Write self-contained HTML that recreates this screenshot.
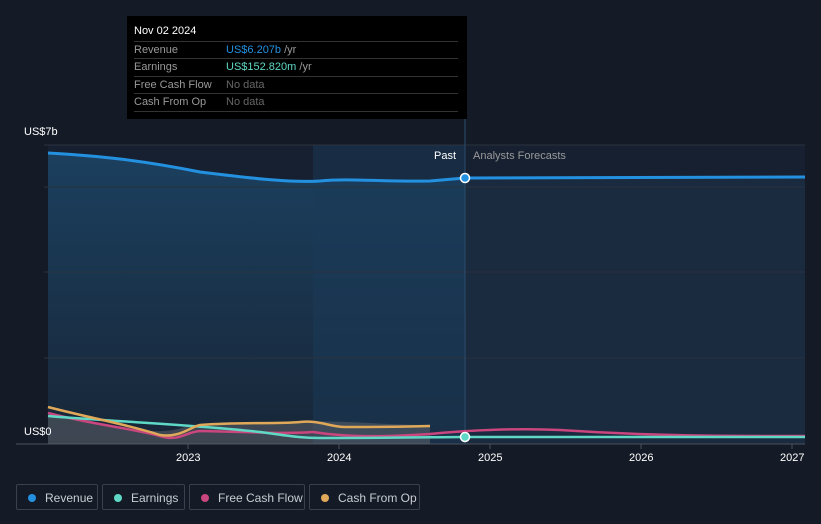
<!DOCTYPE html>
<html><head><style>
body{margin:0;width:821px;height:524px;background:#151b26;font-family:"Liberation Sans",sans-serif;overflow:hidden;position:relative}
.tt{position:absolute;left:127px;top:16px;width:340px;height:103px;background:#000}
.tt .h{position:absolute;left:7px;top:9px;color:#fff;font-size:11px}
.row{position:absolute;left:7px;width:324px;border-top:1px solid #333;height:17px;font-size:11px;line-height:17px;color:#999}
.row span{position:absolute;left:92px}
.leg{position:absolute;top:484px;height:26px;border:1px solid #3a404c;border-radius:2px;font-size:12px;color:#c8ccd2;line-height:26px;box-sizing:border-box}
.leg i{position:absolute;left:11px;top:9px;width:8px;height:8px;border-radius:50%}
.leg b{font-weight:normal;position:absolute;left:28px}
.ax{position:absolute;color:#fff;font-size:11px}
</style></head><body>
<svg width="821" height="524" style="position:absolute;left:0;top:0">
<defs><linearGradient id="g" x1="0" y1="0" x2="0" y2="1"><stop offset="0" stop-color="#1d4a6e"/><stop offset="1" stop-color="#18283a"/></linearGradient></defs>
<rect x="48" y="145" width="757" height="299" fill="#172030"/>
<path d="M48 153 C100 156 140 160 200 172 C250 178 290 183 320 181 C350 178 380 182 430 181 L465 178 L465 444 L48 444Z" fill="url(#g)" opacity="0.75"/>
<rect x="313" y="145" width="152" height="299" fill="#1a3a58" opacity="0.5"/>
<path d="M465 178 L805 177 L805 444 L465 444Z" fill="#1a2b3f"/>
<g stroke="#2a323f" stroke-width="1"><line x1="44" y1="145" x2="805" y2="145"/><line x1="44" y1="187" x2="805" y2="187"/><line x1="44" y1="272" x2="805" y2="272"/><line x1="44" y1="358" x2="805" y2="358"/></g>
<line x1="465" y1="16" x2="465" y2="444" stroke="#2a4c6c"/>
<line x1="16" y1="444" x2="805" y2="444" stroke="#4a505c"/>
<path d="M48 416 L48 444 L430 444 L430 425 C380 425 340 420 310 422 C280 424 220 423 190 425 C160 438 130 428 48 416Z" fill="#6b6d72" opacity="0.45"/>
<path d="M48 413 C90 424 130 428 160 436 C180 442 185 432 200 431 C250 432 290 434 313 432 C340 436 370 438 430 434 C470 430 520 428 560 430 C650 436 720 436 805 436" fill="none" stroke="#c9467e" stroke-width="2.5"/>
<path d="M48 416 C120 422 200 425 260 432 C290 436 300 438 320 438 C400 438 440 437 465 437 L805 437" fill="none" stroke="#5fd9c6" stroke-width="2.5"/>
<path d="M48 407 C90 418 130 425 160 435 C180 438 190 427 200 425 C240 422 280 424 300 422 C320 420 330 427 345 427 C380 427 400 427 430 426" fill="none" stroke="#e0a95a" stroke-width="2.5"/>
<path d="M48 153 C100 156 140 160 200 172 C250 178 290 183 320 181 C350 178 380 182 430 181 L465 178 L805 177" fill="none" stroke="#2391e0" stroke-width="3"/>
<circle cx="465" cy="178" r="4.5" fill="#2391e0" stroke="#fff" stroke-width="1.5"/>
<circle cx="465" cy="437" r="4.5" fill="#5fd9c6" stroke="#fff" stroke-width="1.5"/>
<g stroke="#4a505c"><line x1="188" y1="444" x2="188" y2="449"/><line x1="339" y1="444" x2="339" y2="449"/><line x1="490" y1="444" x2="490" y2="449"/><line x1="641" y1="444" x2="641" y2="449"/><line x1="792" y1="444" x2="792" y2="449"/></g>
</svg>
<div class="tt"><div class="h">Nov 02 2024</div>
<div class="row" style="top:25px">Revenue<span style="color:#2391e0">US$6.207b <em style="font-style:normal;color:#999">/yr</em></span></div>
<div class="row" style="top:42px">Earnings<span style="color:#5fd9c6">US$152.820m <em style="font-style:normal;color:#999">/yr</em></span></div>
<div class="row" style="top:60px">Free Cash Flow<span style="color:#666">No data</span></div>
<div class="row" style="top:77px;border-bottom:1px solid #333">Cash From Op<span style="color:#666">No data</span></div>
</div>
<div class="ax" style="left:24px;top:126px">US$7b</div>
<div class="ax" style="left:24px;top:426px">US$0</div>
<div class="ax" style="left:434px;top:150px">Past</div>
<div class="ax" style="left:473px;top:150px;color:#999">Analysts Forecasts</div>
<div class="ax" style="left:176px;top:452px">2023</div>
<div class="ax" style="left:327px;top:452px">2024</div>
<div class="ax" style="left:478px;top:452px">2025</div>
<div class="ax" style="left:629px;top:452px">2026</div>
<div class="ax" style="left:780px;top:452px">2027</div>
<div class="leg" style="left:16px;width:82px"><i style="background:#2391e0"></i><b>Revenue</b></div>
<div class="leg" style="left:102px;width:83px"><i style="background:#5fd9c6"></i><b>Earnings</b></div>
<div class="leg" style="left:189px;width:116px"><i style="background:#c9467e"></i><b>Free Cash Flow</b></div>
<div class="leg" style="left:309px;width:111px"><i style="background:#e0a95a"></i><b>Cash From Op</b></div>
</body></html>
